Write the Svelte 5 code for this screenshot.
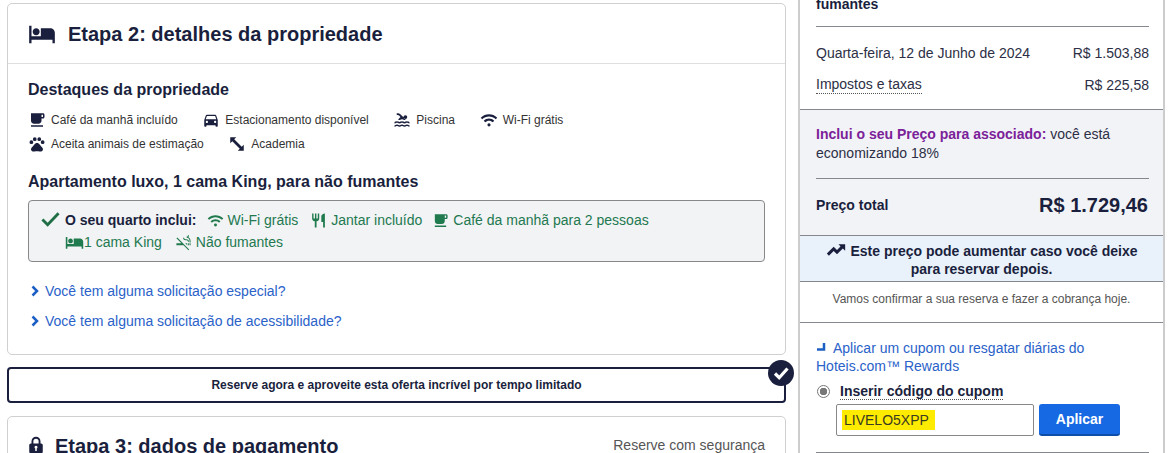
<script>
  const perks = [
    { icon: 'cup', label: 'Café da manhã incluído' },
    { icon: 'car', label: 'Estacionamento disponível' },
    { icon: 'pool', label: 'Piscina' },
    { icon: 'wifi', label: 'Wi-Fi grátis' },
    { icon: 'paw', label: 'Aceita animais de estimação' },
    { icon: 'gym', label: 'Academia' }
  ];
  const paths = {
    bed: 'M7 13c1.660 0 3-1.340 3-3S8.660 7 7 7s-3 1.340-3 3 1.340 3 3 3zm12-6h-8v7H3V5H1v15h2v-3h18v3h2v-9c0-2.210-1.790-4-4-4z',
    cup: 'M20 3H4v10c0 2.210 1.790 4 4 4h6c2.210 0 4-1.790 4-4v-3h2c1.110 0 2-.9 2-2V5c0-1.110-.89-2-2-2zm0 5h-2V5h2v3zM4 19h16v2H4z',
    car: 'M18.920 6.010C18.720 5.420 18.160 5 17.500 5h-11c-.66 0-1.210.42-1.420 1.010L3 12v8c0 .55.45 1 1 1h1c.55 0 1-.45 1-1v-1h12v1c0 .55.45 1 1 1h1c.55 0 1-.45 1-1v-8l-2.080-5.990zM6.500 16c-.83 0-1.500-.67-1.500-1.500S5.670 13 6.500 13s1.500.67 1.500 1.500S7.330 16 6.500 16zm11 0c-.83 0-1.500-.67-1.500-1.500s.67-1.500 1.500-1.500 1.500.67 1.500 1.500-.67 1.500-1.500 1.500zM5 11l1.500-4.500h11L19 11H5z',
    pool: 'M22 21c-1.110 0-1.730-.37-2.180-.64-.37-.22-.6-.36-1.150-.36-.56 0-.78.13-1.150.36-.46.27-1.070.64-2.180.64s-1.730-.37-2.180-.64c-.37-.22-.6-.36-1.150-.36-.56 0-.78.13-1.150.36-.46.27-1.080.64-2.190.64-1.110 0-1.730-.37-2.180-.64-.37-.23-.6-.36-1.150-.36s-.78.13-1.150.36c-.46.27-1.080.64-2.190.64v-2c.56 0 .78-.13 1.150-.36.46-.27 1.080-.64 2.190-.64s1.730.37 2.180.64c.37.23.59.36 1.150.36.56 0 .78-.13 1.150-.36.46-.27 1.080-.64 2.190-.64 1.110 0 1.730.37 2.180.64.37.22.6.36 1.150.36s.78-.13 1.150-.36c.45-.27 1.070-.64 2.180-.64s1.730.37 2.180.64c.37.23.59.36 1.150.36v2zm0-4.500c-1.110 0-1.730-.37-2.180-.64-.37-.22-.6-.36-1.150-.36-.56 0-.78.13-1.150.36-.45.27-1.070.64-2.180.64s-1.730-.37-2.180-.64c-.37-.22-.6-.36-1.150-.36-.56 0-.78.13-1.150.36-.45.27-1.070.64-2.180.64s-1.730-.37-2.180-.64c-.37-.22-.6-.36-1.150-.36s-.78.13-1.150.36c-.47.27-1.090.64-2.200.64v-2c.56 0 .78-.13 1.150-.36.45-.27 1.070-.64 2.180-.64s1.730.37 2.180.64c.37.22.6.36 1.150.36.56 0 .78-.13 1.150-.36.45-.27 1.070-.64 2.180-.64s1.730.37 2.180.64c.37.22.6.36 1.150.36s.78-.13 1.150-.36c.45-.27 1.070-.64 2.180-.64s1.730.37 2.180.64c.37.22.6.36 1.150.36v2zM8.670 12c.56 0 .78-.13 1.150-.36.46-.27 1.080-.64 2.190-.64 1.110 0 1.730.37 2.180.64.37.22.6.36 1.150.36s.78-.13 1.150-.36c.12-.07.26-.15.41-.23L10.480 5C8.930 3.450 7.500 2.990 5 3v2.500c1.820-.01 2.890.39 4 1.500l1 1-3.250 3.250c.31.12.56.27.77.39.37.23.59.36 1.150.36zM16.500 5.500a2.500 2.500 0 1 0 0 5 2.500 2.500 0 0 0 0-5z',
    wifi: 'M1 9l2 2c4.970-4.970 13.030-4.970 18 0l2-2C16.930 2.930 7.080 2.930 1 9zM5 13l2 2c2.760-2.760 7.240-2.760 10 0l2-2C15.140 9.140 8.870 9.140 5 13zM12 16.300a2.100 2.100 0 1 0 0 4.200 2.100 2.100 0 0 0 0-4.200z',
    paw: 'M4.500 7a2.500 2.500 0 1 0 0 5 2.500 2.500 0 0 0 0-5zM9 3a2.500 2.500 0 1 0 0 5 2.500 2.500 0 0 0 0-5zM15 3a2.500 2.500 0 1 0 0 5 2.500 2.500 0 0 0 0-5zM19.500 7a2.500 2.500 0 1 0 0 5 2.500 2.500 0 0 0 0-5zM17.340 14.860c-.87-1.020-1.600-1.890-2.480-2.910-.46-.54-1.050-1.080-1.750-1.320-.11-.04-.22-.07-.33-.09-.25-.04-.52-.04-.78-.04s-.53 0-.79.050c-.11.020-.22.050-.33.090-.7.240-1.280.78-1.750 1.320-.87 1.020-1.600 1.890-2.480 2.910-1.310 1.310-2.920 2.760-2.620 4.790.29 1.020 1.020 2.030 2.330 2.320.73.150 3.060-.44 5.540-.44h.18c2.480 0 4.810.58 5.540.44 1.310-.29 2.040-1.310 2.330-2.320.31-2.040-1.300-3.490-2.610-4.800z',
    gym: 'M3 3h8L8.300 5.700l10 10L21 13v8h-8l2.700-2.700-10-10L3 11z',
    fork: 'M11 9H9V2H7v7H5V2H3v7c0 2.120 1.660 3.840 3.750 3.970V22h2.500v-9.030C11.340 12.840 13 11.120 13 9V2h-2v7zm5-3v8h2.500v8H21V2c-2.760 0-5 2.240-5 4z',
    smoke: 'M2 6l6.990 7H2v3h9.990l7 7L20 21.730 3.270 5 2 6zm18.500 7H22v3h-1.500zM18 13h1.500v3H18zm-1 0h-2.590L17 15.590zm1.850-8.770c.62-.61 1-1.450 1-2.380h-1.500c0 1.020-.83 1.850-1.850 1.850v1.500c2.240 0 4 1.830 4 4.070V12H22V9.760c0-2.220-1.280-4.140-3.150-5.030zM14.730 8.700h1.530c1.050 0 1.970.74 1.970 2.050V11h1.500v-.6c0-1.810-1.600-3.150-3.470-3.150h-1.530c-1.020 0-1.850-.98-1.850-2h-1.500c0 1.850 1.350 3.450 3.350 3.450z',
    trend: 'M15 5h8v8l-2.800-2.800-7 7-4-4L3.500 19 1 16.200l8.200-8.200 4 4 4.200-4.200z',
    lock: 'M12 1a6 6 0 0 1 6 6v3h1a2 2 0 0 1 2 2v9a2 2 0 0 1-2 2H5a2 2 0 0 1-2-2v-9a2 2 0 0 1 2-2h1V7a6 6 0 0 1 6-6zM12 3.500A3.500 3.500 0 0 0 8.500 7v3h7V7A3.500 3.500 0 0 0 12 3.500zM12 13a2 2 0 0 0-1 3.700V20h2v-3.300A2 2 0 0 0 12 13z'
  };
</script>

{#snippet icon(name, cls)}
  <svg class={cls} viewBox="0 0 24 24" aria-hidden="true"><path fill-rule="evenodd" d={paths[name]} /></svg>
{/snippet}

{#snippet chevron()}
  <svg class="chev" viewBox="0 0 8 12" aria-hidden="true"><path d="M1.500 1.500 6 6l-4.500 4.500" /></svg>
{/snippet}

<div class="page">
  <main class="left">
    <section class="card step2">
      <header class="head">
        {@render icon('bed', 'ico-head')}
        <h2>Etapa 2: detalhes da propriedade</h2>
      </header>
      <div class="body">
        <h3>Destaques da propriedade</h3>
        <ul class="perks">
          {#each perks as p}
            <li>{@render icon(p.icon, 'ico-perk')}<span>{p.label}</span></li>
          {/each}
        </ul>
        <h3 class="room">Apartamento luxo, 1 cama King, para não fumantes</h3>
        <div class="includes">
          <svg class="check" viewBox="0 0 20 16" aria-hidden="true"><path d="M1.500 8.500 7 14 18.500 2" /></svg>
          <div class="inc-list">
            <b>O seu quarto inclui:</b>
            <span class="g first">{@render icon('wifi', 'ico-g')}Wi-Fi grátis</span>
            <span class="g">{@render icon('fork', 'ico-g')}Jantar incluído</span>
            <span class="g">{@render icon('cup', 'ico-g')}Café da manhã para 2 pessoas</span>
            <span class="g bed">{@render icon('bed', 'ico-g')}1 cama King</span>
            <span class="g">{@render icon('smoke', 'ico-g')}Não fumantes</span>
          </div>
        </div>
        <a class="link l1" href="#a">{@render chevron()}Você tem alguma solicitação especial?</a>
        <a class="link l2" href="#a">{@render chevron()}Você tem alguma solicitação de acessibilidade?</a>
      </div>
    </section>

    <div class="banner">
      Reserve agora e aproveite esta oferta incrível por tempo limitado
      <svg class="badge" viewBox="0 0 26 26" aria-hidden="true">
        <circle cx="13" cy="13" r="13" />
        <path d="M7 13.500l4.200 4.200L19.500 8.500" />
      </svg>
    </div>

    <section class="card step3">
      {@render icon('lock', 'ico-lock')}
      <h2>Etapa 3: dados de pagamento</h2>
      <span class="secure">Reserve com segurança</span>
    </section>
  </main>

  <aside class="right">
    <div class="summary">
      <b class="clip">fumantes</b>
      <hr />
      <div class="row r1"><span>Quarta-feira, 12 de Junho de 2024</span><span>R$ 1.503,88</span></div>
      <div class="row r2"><span class="dotted">Impostos e taxas</span><span>R$ 225,58</span></div>
    </div>
    <div class="gray">
      <p class="member"><b>Inclui o seu Preço para associado:</b> você está economizando 18%</p>
      <hr />
      <div class="total"><b>Preço total</b><strong>R$ 1.729,46</strong></div>
    </div>
    <div class="notice">{@render icon('trend', 'ico-trend')}Este preço pode aumentar caso você deixe<br />para reservar depois.</div>
    <p class="confirm">Vamos confirmar a sua reserva e fazer a cobrança hoje.</p>
    <div class="coupon">
      <a class="apply" href="#a"><svg class="corner" viewBox="0 0 10 8" aria-hidden="true"><path d="M8 0v6.500H1" /></svg>Aplicar um cupom ou resgatar diárias do Hoteis.com™ Rewards</a>
      <label class="radio"><span class="dot"></span><span class="dotted bold">Inserir código do cupom</span></label>
      <div class="field">
        <div class="input"><mark>LIVELO5XPP</mark></div>
        <button type="button">Aplicar</button>
      </div>
      <hr />
    </div>
  </aside>
</div>

<style>
  :global(body) { margin: 0; background: #fff; }
  .page {
    width: 1172px; height: 453px; overflow: hidden;
    display: flex; align-items: flex-start;
    font-family: "Liberation Sans", Arial, sans-serif;
    color: #1a1f3d;
  }
  h2, h3, p, ul { margin: 0; padding: 0; }
  svg { display: block; flex: none; fill: currentColor; }
  a { text-decoration: none; }

  .left { width: 779px; margin: 3px 0 0 7px; flex: none; }
  .card { border: 1px solid #d0d0d0; border-radius: 5px; box-sizing: border-box; }
  .step2 { height: 352px; }
  .head { height: 60px; display: flex; align-items: center; padding-left: 20px; border-bottom: 1px solid #dfdfdf; box-sizing: border-box; }
  .ico-head { width: 28px; height: 28px; margin-right: 12px; color: #1a1f3d; }
  h2 { font-size: 20px; line-height: 24px; font-weight: 700; color: #1a1f3d; }
  .body { padding: 16px 20px 0; }
  h3 { font-size: 16px; line-height: 20px; font-weight: 700; color: #1a1f3d; }
  .perks { list-style: none; display: flex; flex-wrap: wrap; margin-top: 10px; width: 600px; row-gap: 4px; }
  .perks li { display: flex; align-items: center; height: 20px; font-size: 12px; color: #333; margin-right: 24.600px; }
  .ico-perk { width: 18px; height: 18px; margin-right: 5px; color: #1a1f3d; }
  .room { margin-top: 18px; }
  .includes { margin-top: 8px; width: 737px; height: 62px; box-sizing: border-box; border: 1px solid #888; border-radius: 4px; background: #f2f3f5; display: flex; padding: 8px 12px; }
  .check { width: 19px; height: 16px; margin: 2px 5px 0 0; fill: none; stroke: #1f6e45; stroke-width: 3; }
  .inc-list { font-size: 14px; line-height: 22px; display: flex; flex-wrap: wrap; width: 640px; color: #1a1f3d; }
  .inc-list b { margin-right: 11px; }
  .g { display: inline-flex; align-items: center; color: #227950; margin-right: 10px; }
  .ico-g { width: 17px; height: 17px; margin-right: 4px; color: #1f7a4d; }
  .g.first { margin-right: 12px; }
  .g.first .ico-g { margin-right: 3px; }
  .g.bed { margin-right: 13px; }
  .g.bed .ico-g { width: 19px; height: 19px; margin-right: 0; }
  .link { display: flex; align-items: center; font-size: 14px; line-height: 20px; color: #2a62c9; }
  .l1 { margin-top: 19px; }
  .l2 { margin-top: 10px; }
  .chev { width: 8px; height: 12px; margin: 0 6px 0 3px; fill: none; stroke: #1c5fc4; stroke-width: 2.500; }

  .banner {
    position: relative; margin-top: 12px; height: 36px; box-sizing: border-box;
    border: 2px solid #1a1f3d; border-radius: 4px;
    display: flex; align-items: center; justify-content: center;
    font-size: 12px; font-weight: 700; color: #1a1f3d; background: #fff;
  }
  .badge { position: absolute; right: -10px; top: -9px; width: 26px; height: 26px; }
  .badge circle { fill: #1a1f3d; }
  .badge path { fill: none; stroke: #fff; stroke-width: 3.200; }

  .step3 { margin-top: 13px; height: 70px; display: flex; align-items: flex-start; padding: 16px 20px 0 19px; }
  .ico-lock { width: 18px; height: 24px; margin-right: 10px; color: #1a1f3d; }
  .step3 h2 { line-height: 26px; }
  .secure { margin-left: auto; font-size: 14px; line-height: 24px; color: #555; }

  .right { width: 367px; margin-left: 12px; flex: none; margin-top: -4px; border-left: 2px solid #ccc; border-right: 2px solid #ccc; box-sizing: border-box; height: 460px; overflow: hidden; }
  hr { border: 0; border-top: 1px solid #85878f; margin: 0; }
  .summary { padding: 0 14px 0 16px; height: 113px; box-sizing: border-box; }
  .clip { display: block; font-size: 14px; line-height: 17px; color: #1a1f3d; margin-top: 0; }
  .summary hr { margin-top: 13px; }
  .row { display: flex; justify-content: space-between; font-size: 14px; line-height: 18px; color: #2c2f45; }
  .r1 { margin-top: 17px; }
  .r2 { margin-top: 14px; }
  .dotted { border-bottom: 1px dotted #555; line-height: 16px; }
  .gray { background: #f2f3f7; border-top: 1px solid #85878f; border-bottom: 1px solid #85878f; padding: 15px 14px 0 16px; height: 127px; box-sizing: border-box; }
  .member { font-size: 14px; line-height: 19px; color: #2c2f45; }
  .member b { color: #7b2199; }
  .gray hr { margin-top: 15px; }
  .total { display: flex; justify-content: space-between; align-items: center; margin-top: 13px; height: 26px; }
  .total b { font-size: 14px; }
  .total strong { font-size: 20px; margin-right: 1px; }
  .notice { background: #e9f2fb; height: 46px; box-sizing: border-box; border-bottom: 1px solid #85878f; padding-top: 4px; text-align: center; font-size: 14px; line-height: 18px; font-weight: 700; }
  .ico-trend { display: inline-block; width: 22px; height: 20px; vertical-align: -4px; margin-right: 3px; }
  .confirm { height: 41px; box-sizing: border-box; border-bottom: 1px solid #85878f; padding-top: 9px; text-align: center; font-size: 12px; line-height: 16px; color: #555; }
  .coupon { padding: 16px 14px 0 16px; }
  .apply { display: block; font-size: 14px; line-height: 18px; color: #2a62c9; width: 300px; }
  .corner { display: inline-block; width: 10px; height: 8px; fill: none; stroke: #1c5fc4; stroke-width: 2.500; margin-right: 7px; vertical-align: 2px; }
  .radio { display: flex; align-items: center; margin-top: 7px; font-size: 14px; height: 18px; }
  .dot { width: 13px; height: 13px; border-radius: 50%; border: 1px solid #777; box-sizing: border-box; background: radial-gradient(circle, #777 0 3.500px, #fff 4px); margin-right: 10px; margin-left: 1px; }
  .bold { font-weight: 700; }
  .field { display: flex; margin: 4px 0 16px 20px; gap: 5px; }
  .input { width: 198px; height: 32px; box-sizing: border-box; border: 1px solid #888; border-radius: 2px; display: flex; align-items: center; padding-left: 5px; font-size: 14px; background: #fff; }
  mark { background: #ffeb00; color: #3a3a20; padding: 2px 6px 2px 2px; }
  button { width: 81px; height: 32px; border: 0; border-bottom: 2px solid #0d4ea8; border-radius: 3px; background: #1668e3; color: #fff; font: 700 14px "Liberation Sans", Arial, sans-serif; }
</style>
